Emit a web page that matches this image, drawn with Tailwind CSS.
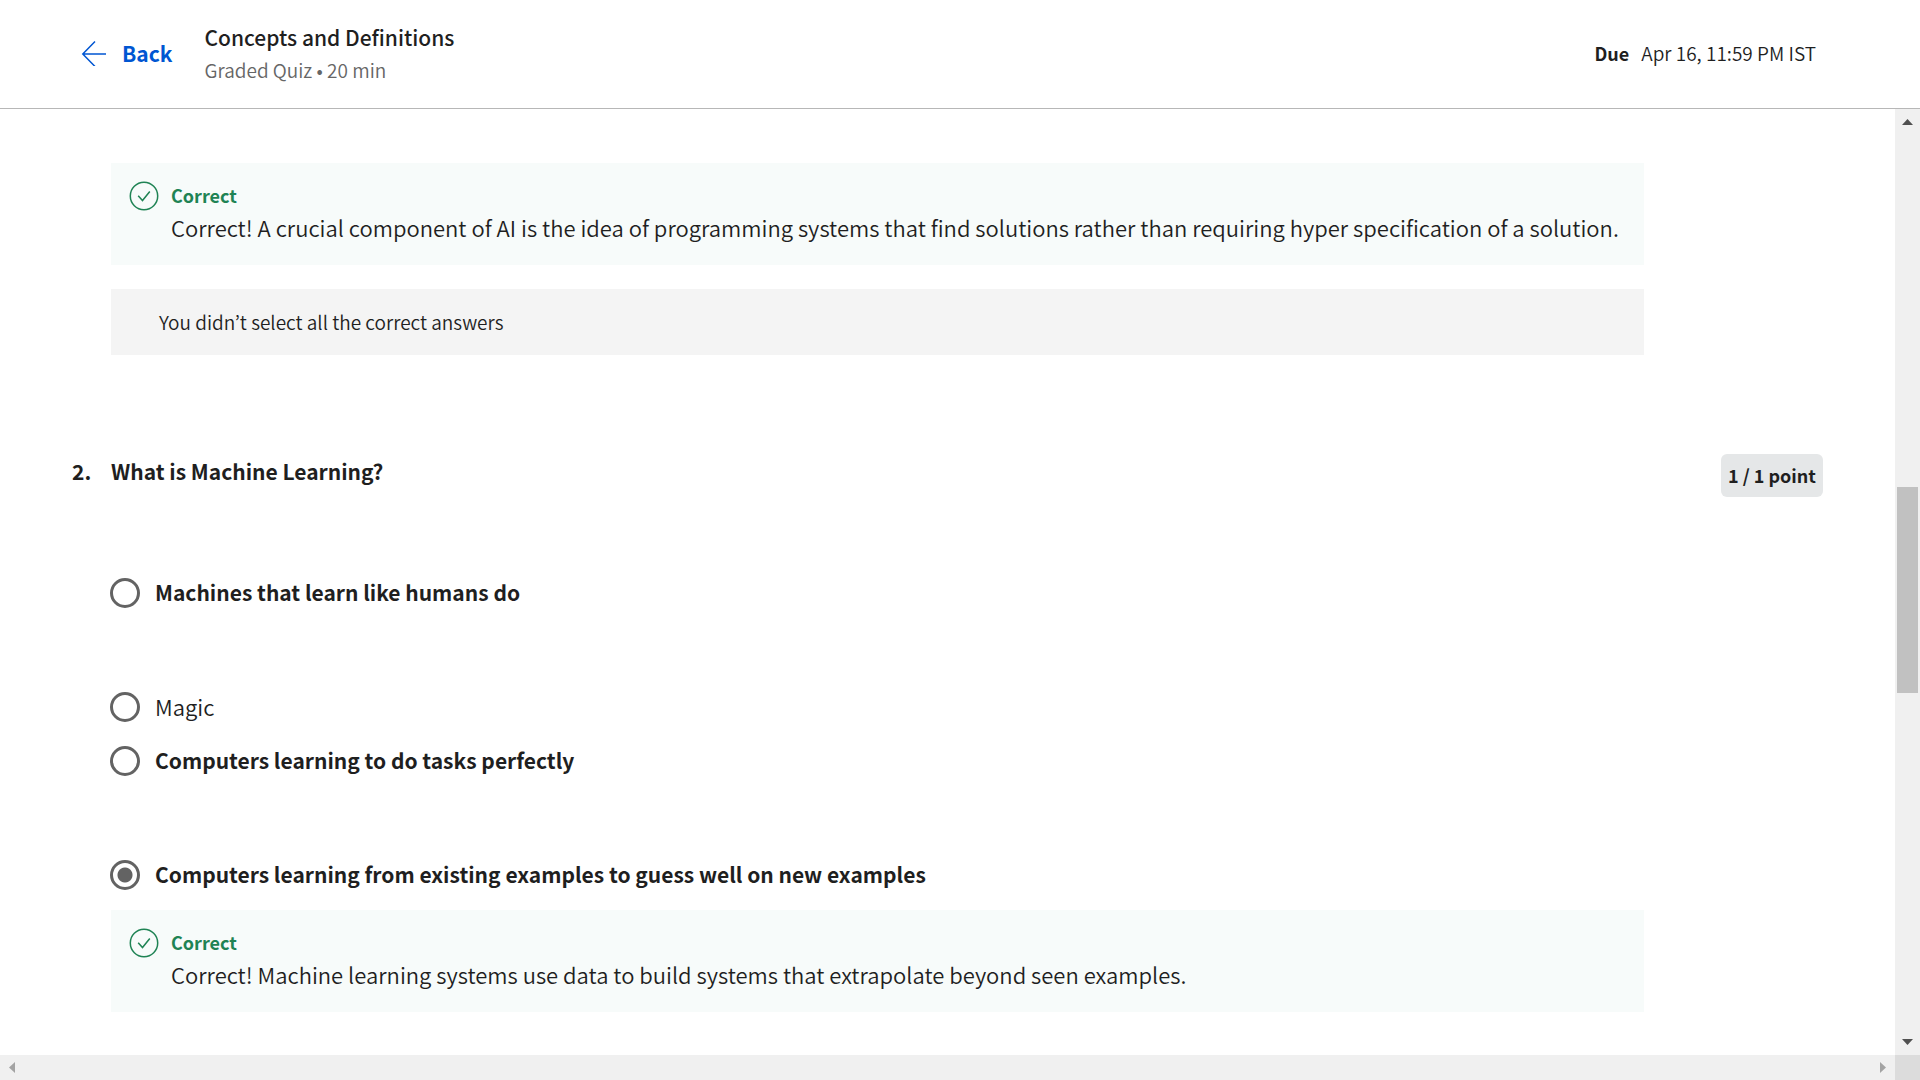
<!DOCTYPE html>
<html lang="en">
<head>
<meta charset="utf-8">
<meta name="viewport" content="width=device-width, initial-scale=1">
<title>Concepts and Definitions</title>
<script src="https://cdn.jsdelivr.net/npm/@tailwindcss/browser@4"></script>
</head>
<body class="flex h-screen flex-col overflow-hidden bg-white font-['Noto_Sans_CJK_JP','Noto_Sans',sans-serif] text-[#1f1f1f]">

  <header class="flex h-[109px] shrink-0 items-center border-b border-[#b7b7b7] pr-[104px] pl-20">
    <a href="#" class="flex items-center gap-4 pb-0.5 text-[21px] leading-7 font-bold text-[#0056d2]">
      <svg class="size-[26px]" viewBox="0 0 26 26" fill="none" stroke="currentColor" stroke-width="1.5" aria-hidden="true">
        <path d="M15 1.500 2.800 14 15 26.500M2.800 14H27"/>
      </svg>
      Back
    </a>
    <div class="ml-8">
      <h1 class="text-[21px] leading-8 font-medium">Concepts and Definitions</h1>
      <p class="text-[19px] leading-[34px] font-[350] text-[#666666]">Graded Quiz • 20 min</p>
    </div>
    <p class="ml-auto flex items-center gap-3 pb-0.5 text-[19px] leading-7 font-[350]"><strong class="text-[18px] font-bold">Due</strong>Apr 16, 11:59 PM IST</p>
  </header>

  <div class="flex min-h-0 flex-1">
    <main class="min-w-0 flex-1 overflow-hidden pt-[54px] pr-[72px] pl-[72px]">
      <section class="mr-[179px] ml-[39px]">
        <div class="flex h-[102px] gap-3 bg-[#f7fbfa] pt-[18px] pl-[18px]">
          <svg class="size-[30px] shrink-0 text-[#1f8354]" viewBox="0 0 30 30" fill="none" stroke="currentColor" stroke-width="1.5" aria-hidden="true">
            <circle cx="15" cy="15" r="13.700"/><path d="m9.200 14.800 4.300 4.700 7.300-9"/>
          </svg>
          <div>
            <p class="text-[18px] leading-7 font-bold text-[#1f8354]">Correct</p>
            <p class="text-[22px] leading-9 font-[350]">Correct! A crucial component of AI is the idea of programming systems that find solutions rather than requiring hyper specification of a solution.</p>
          </div>
        </div>
        <p class="mt-6 flex h-[66px] items-center bg-[#f4f4f4] pl-12 text-[19px] leading-7 font-[350]">You didn’t select all the correct answers</p>
      </section>

      <section class="mt-[99px] flex items-start">
        <span class="w-[39px] shrink-0 pt-px text-[21px] leading-8 font-bold">2.</span>
        <fieldset class="min-w-0 flex-1">
          <legend class="pt-px text-[21px] leading-8 font-bold">What is Machine Learning?</legend>
          <div class="mt-[89px] -ml-px flex flex-col text-[21px] font-bold">
            <label class="mb-20 flex h-[34px] items-center gap-[15px]"><input type="radio" name="q2" class="size-[30px] appearance-none rounded-full border-3 border-[#636363]">Machines that learn like humans do</label>
            <label class="mb-5 flex h-[34px] items-center gap-[15px]"><input type="radio" name="q2" class="size-[30px] appearance-none rounded-full border-3 border-[#636363]"><span class="pb-0.5 text-[22px] font-[350]">Magic</span></label>
            <label class="mb-20 flex h-[34px] items-center gap-[15px]"><input type="radio" name="q2" class="size-[30px] appearance-none rounded-full border-3 border-[#636363]">Computers learning to do tasks perfectly</label>
            <label class="flex h-[34px] items-center gap-[15px]"><input type="radio" name="q2" checked class="size-[30px] appearance-none rounded-full border-3 border-[#636363] bg-[radial-gradient(circle,#636363_7px,transparent_8px)]">Computers learning from existing examples to guess well on new examples</label>
          </div>
          <div class="mt-[18px] flex h-[102px] gap-3 bg-[#f7fbfa] pt-[18px] pl-[18px]">
            <svg class="size-[30px] shrink-0 text-[#1f8354]" viewBox="0 0 30 30" fill="none" stroke="currentColor" stroke-width="1.5" aria-hidden="true">
              <circle cx="15" cy="15" r="13.700"/><path d="m9.200 14.800 4.300 4.700 7.300-9"/>
            </svg>
            <div>
              <p class="text-[18px] leading-7 font-bold text-[#1f8354]">Correct</p>
              <p class="text-[22px] leading-9 font-[350]">Correct! Machine learning systems use data to build systems that extrapolate beyond seen examples.</p>
            </div>
          </div>
        </fieldset>
        <span class="ml-[77px] flex h-[43px] w-[102px] shrink-0 items-center justify-center rounded-md bg-[#e5e7e8] pb-0.5 text-[18px] leading-6 font-bold">1 / 1 point</span>
      </section>
    </main>

    <!-- vertical scroll bar -->
    <div class="flex w-[25px] shrink-0 flex-col items-center bg-[#f0f0f0] py-2.5" aria-hidden="true">
      <svg class="h-[6px] w-[11px] fill-[#505050]" viewBox="0 0 11 6"><path d="M0 6 5.500 0 11 6Z"/></svg>
      <div class="mt-[362px] h-[206px] w-[21px] bg-[#c1c1c1]"></div>
      <svg class="mt-auto h-[6px] w-[11px] fill-[#505050]" viewBox="0 0 11 6"><path d="M0 0H11L5.500 6Z"/></svg>
    </div>
  </div>

  <!-- horizontal scroll bar -->
  <div class="flex h-[25px] shrink-0 bg-[#f0f0f0]" aria-hidden="true">
    <div class="flex flex-1 items-center justify-between px-[9px]">
      <svg class="h-[11px] w-[6px] fill-[#a3a3a3]" viewBox="0 0 6 11"><path d="M6 0V11L0 5.500Z"/></svg>
      <svg class="h-[11px] w-[6px] fill-[#a3a3a3]" viewBox="0 0 6 11"><path d="M0 0V11L6 5.500Z"/></svg>
    </div>
    <div class="w-[25px] bg-[#dcdcdc]"></div>
  </div>
</body>
</html>
